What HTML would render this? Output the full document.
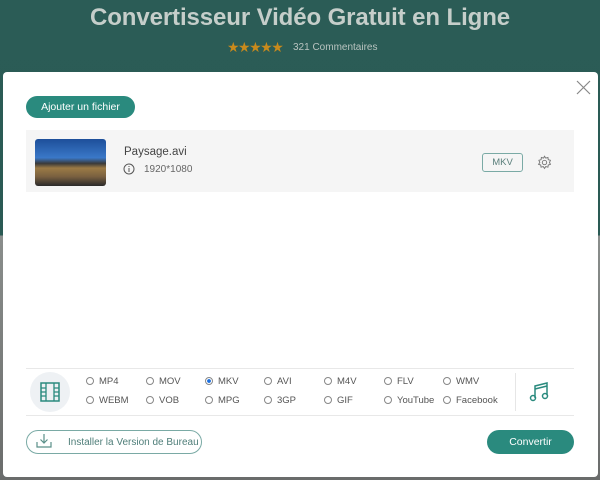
<!DOCTYPE html>
<html><head><meta charset="utf-8"><style>
*{margin:0;padding:0;box-sizing:border-box}
body{width:600px;height:480px;overflow:hidden;position:relative;font-family:"Liberation Sans",sans-serif;background:linear-gradient(180deg,#2b5c56 0,#2a5a54 235px,#8a8e8c 236px,#6a6c6b 480px)}
.a{position:absolute}
.title{left:0;width:600px;top:4px;text-align:center;font-size:24px;font-weight:bold;color:#c5ceca;letter-spacing:-0.1px}
.stars{left:227px;top:39px;color:#c98a1c;font-size:14px;letter-spacing:-1.5px}
.rev{left:293px;top:42px;font-size:10px;color:#b9c4c0}
.modal{left:3px;top:72px;width:595px;height:405px;background:#fff;border-radius:4px}
.btn{background:#2a8a7e;color:#fff;border-radius:12px;font-size:10.5px;text-align:center}
.radio{font-size:9.5px;color:#555}
.radio i{display:inline-block;width:8px;height:8px;border:1px solid #888;border-radius:50%;margin-right:5px;vertical-align:-1px}
</style></head><body>
<div class="a title">Convertisseur Vidéo Gratuit en Ligne</div>
<div class="a stars">★★★★★</div>
<div class="a rev">321 Commentaires</div>
<div class="a modal"></div>
<svg class="a" style="left:576px;top:80px" width="15" height="15"><path d="M1 1L14 14M14 1L1 14" stroke="#888" stroke-width="1.2"/></svg>
<div class="a btn" style="left:26px;top:96px;width:109px;height:22px;line-height:22px">Ajouter un fichier</div>
<div class="a" style="left:26px;top:130px;width:548px;height:62px;background:#f5f5f5"></div>
<div class="a" style="left:35px;top:139px;width:71px;height:47px;border-radius:3px;background:linear-gradient(180deg,#1d4f9a 0,#3a78c8 40%,#3a3a3a 52%,#9c7a45 62%,#7a6040 80%,#2a2a2a 100%)"></div>
<div class="a" style="left:124px;top:146px;font-size:11.5px;color:#444">Paysage.avi</div>
<svg class="a" style="left:123px;top:163px" width="12" height="12"><circle cx="6" cy="6" r="5" fill="none" stroke="#555"/><path d="M6 5v4M6 3v1" stroke="#555"/></svg>
<div class="a" style="left:144px;top:164px;font-size:10px;color:#666">1920*1080</div>
<div class="a" style="left:482px;top:153px;width:41px;height:19px;border:1px solid #7aaaa5;border-radius:3px;font-size:9.5px;color:#5a7f7b;text-align:center;line-height:17px">MKV</div>
<svg class="a" style="left:537px;top:155px" width="15" height="15" viewBox="0 0 24 24"><path d="M12 2l2 3 3.5-1 .5 3.5 3.5 1-1.5 3.5 1.5 3-3.5 1-.5 3.5-3.5-1-2 3-2-3-3.5 1-.5-3.5-3.5-1L4.5 12 3 8.5l3.5-1L7 4l3.5 1z" fill="none" stroke="#777" stroke-width="1.5"/><circle cx="12" cy="12" r="3.5" fill="none" stroke="#777" stroke-width="1.5"/></svg>
<div class="a" style="left:26px;top:368px;width:548px;height:1px;background:#e8e8e8"></div>
<div class="a" style="left:26px;top:415px;width:548px;height:1px;background:#e8e8e8"></div>
<div class="a" style="left:30px;top:372px;width:40px;height:40px;border-radius:50%;background:#eef1f4"></div>
<svg class="a" style="left:40px;top:382px" width="20" height="20"><rect x="1" y="1" width="18" height="18" fill="none" stroke="#2a8a7e" stroke-width="1.5"/><path d="M6 1v18M14 1v18M1 6h5M1 10h5M1 14h5M14 6h5M14 10h5M14 14h5" stroke="#2a8a7e" stroke-width="1.3"/></svg>
<div class="a" style="left:515px;top:373px;width:1px;height:38px;background:#e6e6e6"></div>
<svg class="a" style="left:529px;top:382px" width="20" height="20"><path d="M6 16V4l12-3v12" fill="none" stroke="#2a8a7e" stroke-width="1.5"/><circle cx="4" cy="16" r="2.5" fill="none" stroke="#2a8a7e" stroke-width="1.5"/><circle cx="16" cy="14" r="2.5" fill="none" stroke="#2a8a7e" stroke-width="1.5"/><path d="M6 7l12-3" stroke="#2a8a7e" stroke-width="1.5"/></svg>
<div class="a radio" style="left:86px;top:376px"><i></i>MP4</div>
<div class="a radio" style="left:146px;top:376px"><i></i>MOV</div>
<div class="a radio" style="left:205px;top:376px"><i style="background:radial-gradient(#1a6fe0 40%,#fff 50%)"></i>MKV</div>
<div class="a radio" style="left:264px;top:376px"><i></i>AVI</div>
<div class="a radio" style="left:324px;top:376px"><i></i>M4V</div>
<div class="a radio" style="left:384px;top:376px"><i></i>FLV</div>
<div class="a radio" style="left:443px;top:376px"><i></i>WMV</div>
<div class="a radio" style="left:86px;top:395px"><i></i>WEBM</div>
<div class="a radio" style="left:146px;top:395px"><i></i>VOB</div>
<div class="a radio" style="left:205px;top:395px"><i></i>MPG</div>
<div class="a radio" style="left:264px;top:395px"><i></i>3GP</div>
<div class="a radio" style="left:324px;top:395px"><i></i>GIF</div>
<div class="a radio" style="left:384px;top:395px"><i></i>YouTube</div>
<div class="a radio" style="left:443px;top:395px"><i></i>Facebook</div>
<div class="a" style="left:26px;top:430px;width:176px;height:24px;border:1px solid #7aaaa5;border-radius:12px"></div>
<svg class="a" style="left:36px;top:433px" width="16" height="16"><path d="M8 1v9M4.5 6.5L8 10l3.5-3.5M1 9v5h14V9" fill="none" stroke="#5a8f89" stroke-width="1.2"/></svg>
<div class="a" style="left:68px;top:437px;font-size:10px;color:#4f7e79">Installer la Version de Bureau</div>
<div class="a btn" style="left:487px;top:430px;width:87px;height:24px;line-height:24px">Convertir</div>
</body></html>
